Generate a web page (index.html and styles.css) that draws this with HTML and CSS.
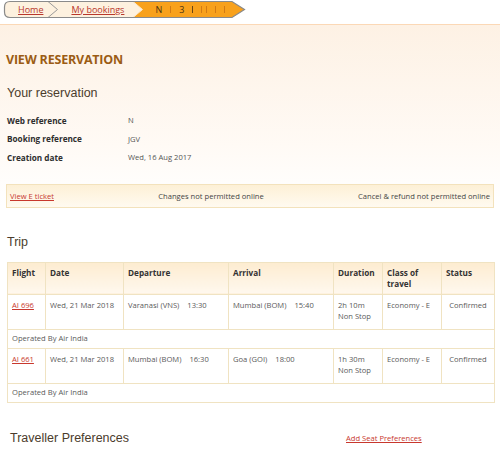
FILE: index.html
```html
<!DOCTYPE html>
<html>
<head>
<meta charset="utf-8">
<link rel="stylesheet" href="styles.css">
</head>
<body>
<div class="top">
  <nav class="crumbs">
    <svg class="crumbs-bg" width="250" height="19" viewBox="0 0 250 19">
      <path d="M10 1.5H232L244.5 9.5L232 17.5H10Q4.5 17.5 4.5 12V7Q4.5 1.5 10 1.5Z" fill="#fdf1df"/>
      <path d="M133 1.5H232L244.5 9.5L232 17.5H133L142.5 9.5Z" fill="#f8a11c"/>
      <path d="M133 1.5L142.5 9.5L133 17.5" fill="none" stroke="#fbe7c8" stroke-width="1"/>
      <path d="M48 1.5L57.5 9.5L48 17.5" fill="none" stroke="#9a9a9a" stroke-width="1"/>
      <path d="M10 1.5H232L244.5 9.5L232 17.5H10Q4.5 17.5 4.5 12V7Q4.5 1.5 10 1.5Z" fill="none" stroke="#8a8a8a" stroke-width="1.2"/>
    </svg>
    <div class="crumb-row">
      <a class="crumb crumb-home" href="#">Home</a>
      <a class="crumb crumb-book" href="#">My bookings</a>
      <span class="crumb-cur"><span class="cur-t">N</span><span class="bar"></span><span class="cur-t">3</span><span class="bar dark"></span><span class="bar"></span><span class="bar tight"></span><span class="bar"></span><span class="bar"></span></span>
    </div>
  </nav>
</div>
<main class="page">
  <h1 class="title">VIEW RESERVATION</h1>
  <h2 class="section">Your reservation</h2>
  <div class="details">
    <div class="row"><span class="label">Web reference</span><span class="value">N</span></div>
    <div class="row"><span class="label">Booking reference</span><span class="value">JGV</span></div>
    <div class="row"><span class="label">Creation date</span><span class="value">Wed, 16 Aug 2017</span></div>
  </div>
  <div class="infobar">
    <a class="link" href="#">View E ticket</a>
    <span class="mid">Changes not permitted online</span>
    <span>Cancel &amp; refund not permitted online</span>
  </div>
  <h2 class="section trip">Trip</h2>
  <table class="trips">
    <colgroup>
      <col class="c1"><col class="c2"><col class="c3"><col class="c4"><col class="c5"><col class="c6"><col class="c7">
    </colgroup>
    <thead>
      <tr><th>Flight</th><th>Date</th><th>Departure</th><th>Arrival</th><th>Duration</th><th>Class of travel</th><th>Status</th></tr>
    </thead>
    <tbody>
      <tr class="leg"><td><a class="link" href="#">AI 696</a></td><td>Wed, 21 Mar 2018</td><td>Varanasi (VNS)<span class="time">13:30</span></td><td>Mumbai (BOM)<span class="time">15:40</span></td><td>2h 10m<br>Non Stop</td><td>Economy - E</td><td class="status">Confirmed</td></tr>
      <tr class="op"><td colspan="7">Operated By Air India</td></tr>
      <tr class="leg"><td><a class="link" href="#">AI 661</a></td><td>Wed, 21 Mar 2018</td><td>Mumbai (BOM)<span class="time">16:30</span></td><td>Goa (GOI)<span class="time">18:00</span></td><td>1h 30m<br>Non Stop</td><td>Economy - E</td><td class="status">Confirmed</td></tr>
      <tr class="op"><td colspan="7">Operated By Air India</td></tr>
    </tbody>
  </table>
  <div class="prefs">
    <h2 class="section prefs-title">Traveller Preferences</h2>
    <a class="link" href="#">Add Seat Preferences</a>
  </div>
</main>
</body>
</html>
```
FILE: styles.css
```css
* { box-sizing: border-box; }
html, body { background: #fff; }
body {
  margin: 0;
  font-family: "Open Sans", "DejaVu Sans", sans-serif;
  font-size: 7.6px;
  color: #555;
  min-height: 459px;
}
.top {
  height: 25px;
  border-bottom: 1px solid #fbd8b6;
  background: #fff;
}
.crumbs {
  position: relative;
  width: 250px;
  height: 19px;
}
.crumbs-bg {
  position: absolute;
  left: 0;
  top: 0;
}
.crumb-row {
  position: relative;
  display: flex;
  align-items: center;
  height: 19px;
  font-size: 9px;
}
.crumb {
  color: #b8372c;
  text-decoration: underline;
}
.crumb-home { margin-left: 18px; }
.crumb-book { margin-left: 28px; }
.crumb-cur {
  display: flex;
  align-items: center;
  margin-left: 31px;
  gap: 8px;
  color: #4a3210;
}
.bar {
  display: inline-block;
  width: 1px;
  height: 7px;
  background: #d27a14;
}
.bar.dark { background: #6a4512; }
.bar.tight { margin-left: -4px; }
.page {
  background: linear-gradient(#fdf1e4, #fffaf5 120px, #fff 180px);
  padding: 0 6px 20px;
  min-height: 434px;
}
.title {
  margin: 0;
  padding-top: 27px;
  font-size: 12.5px;
  line-height: 16px;
  font-weight: 700;
  color: #9b5c14;
  letter-spacing: -0.2px;
}
.section {
  margin: 16px 0 0 1px;
  font-family: "Liberation Sans", Arial, sans-serif;
  font-weight: normal;
  font-size: 12.5px;
  line-height: 18px;
  color: #4b3c2c;
}
.details { margin-top: 9px; }
.row {
  display: flex;
  align-items: center;
  height: 18.5px;
  padding-left: 1px;
}
.label {
  width: 121px;
  font-weight: 700;
  font-size: 8.2px;
  color: #2e2e2e;
}
.value { color: #555; }
.infobar {
  margin-top: 17px;
  height: 24px;
  border: 1px solid #f3e2bc;
  background: linear-gradient(#fdf0d6, #fffaf0);
  display: flex;
  justify-content: space-between;
  align-items: center;
  padding: 0 3px;
  color: #444;
}
.mid { margin-left: 10px; }
.link {
  color: #c8382e;
  text-decoration: underline;
}
.trip { margin-top: 25px; }
.trips {
  margin-top: 11px;
  margin-left: 1px;
  width: 487px;
  border-collapse: collapse;
  table-layout: fixed;
  background: #fff;
}
.c1 { width: 38px; }
.c2 { width: 78px; }
.c3 { width: 105px; }
.c4 { width: 105px; }
.c5 { width: 49px; }
.c6 { width: 59px; }
.c7 { width: 53px; }
.trips th, .trips td {
  border: 1px solid #f0e3c2;
  vertical-align: top;
  text-align: left;
  padding: 4px 4px;
  line-height: 11.5px;
}
.trips th {
  height: 30px;
  font-weight: 700;
  font-size: 8.2px;
  color: #333;
  background: linear-gradient(#fdecd0, #fff8ee);
}
.trips td { color: #5a5a5a; }
.leg td { height: 35px; padding-top: 5px; }
.time { margin-left: 8px; }
.status { text-align: center !important; }
.op td {
  height: 19px;
  vertical-align: middle;
  padding: 0 4px;
}
.prefs {
  display: flex;
  align-items: center;
  margin-top: 26px;
  padding-left: 4px;
}
.prefs-title {
  margin: 0;
  width: 336px;
}
```
